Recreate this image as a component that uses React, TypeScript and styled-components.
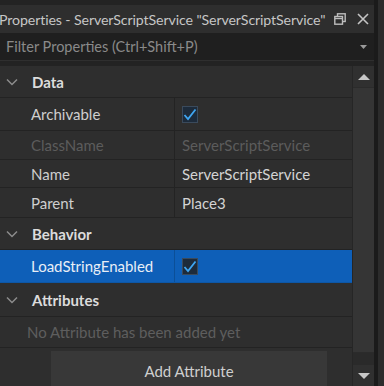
import React from 'react';
import styled, { createGlobalStyle } from 'styled-components';

const GlobalStyle = createGlobalStyle`
  html, body {
    margin: 0;
    padding: 0;
    background: #232323;
  }
  body {
    font-family: Lato, "Noto Sans", sans-serif;
  }
  *, *::before, *::after {
    box-sizing: border-box;
  }
`;

const Panel = styled.div`
  width: 384px;
  height: 386px;
  display: flex;
  overflow: hidden;
  background: #232323;
`;

const Main = styled.div`
  width: 374px;
  display: flex;
  flex-direction: column;
  padding-top: 5px;
`;

const Edge = styled.div`
  flex: 1;
  border-left: 4px solid #1b1b1b;
  background: #2c2c2c;
`;

const TitleBar = styled.div`
  height: 28px;
  background: #2e2e2e;
  display: flex;
  align-items: center;
  color: #c6c6c6;
  font-size: 14.2px;
  white-space: nowrap;
  overflow: hidden;
`;

const TitleText = styled.span`
  flex: 1;
  min-width: 0;
  margin-left: -1px;
  letter-spacing: -0.12px;
`;

const TitleIcons = styled.div`
  display: flex;
  align-items: center;
  gap: 11px;
  padding-right: 5px;
  flex-shrink: 0;
`;

const FilterBar = styled.div`
  height: 28px;
  background: #1f1f1f;
  display: flex;
  align-items: center;
  justify-content: space-between;
  padding: 0 7px 0 6px;
  color: #8a8a8a;
  font-size: 14.5px;
  border-bottom: 1px solid #2f2f2f;
`;

const Content = styled.div`
  margin-top: 5px;
  flex: 1;
  display: flex;
  gap: 1px;
  background: #262626;
`;

const List = styled.div`
  width: 352px;
  display: flex;
  flex-direction: column;
  background: #2e2e2e;
`;

const HeaderRow = styled.div<{ $h: number }>`
  height: ${p => p.$h}px;
  flex-shrink: 0;
  display: flex;
  align-items: center;
  border-bottom: 1px solid #232323;
  color: #dcdcdc;
  font-weight: 700;
  font-size: 15px;
`;

const Chevron = styled.span`
  width: 32px;
  display: flex;
  justify-content: center;
  padding-right: 8px;
`;

const PropRow = styled.div<{ $h: number; $selected?: boolean }>`
  height: ${p => p.$h}px;
  flex-shrink: 0;
  display: grid;
  grid-template-columns: 175px 1fr;
  border-bottom: 1px solid ${p => (p.$selected ? '#0d57a6' : '#232323')};
  background: ${p => (p.$selected ? '#0e5fb8' : '#2e2e2e')};
  font-size: 15px;
`;

const NameCell = styled.div<{ $dim?: boolean; $selected?: boolean }>`
  display: flex;
  align-items: center;
  padding-left: 31px;
  border-right: 1px solid ${p => (p.$selected ? '#0b4f98' : '#232323')};
  color: ${p => (p.$dim ? '#5c5c5c' : p.$selected ? '#e8eef6' : '#cfcfcf')};
`;

const ValueCell = styled.div<{ $dim?: boolean }>`
  display: flex;
  align-items: center;
  padding-left: 7px;
  color: ${p => (p.$dim ? '#5c5c5c' : '#d4d4d4')};
`;

const CheckBox = styled.span`
  width: 16px;
  height: 17px;
  background: #1d2b3b;
  border: 1px solid #3a4a5c;
  display: flex;
  align-items: center;
  justify-content: center;
`;

const EmptyNote = styled.div`
  height: 31px;
  flex-shrink: 0;
  display: flex;
  align-items: center;
  padding-left: 27px;
  color: #5e5e5e;
  font-size: 15px;
  border-bottom: 1px solid #232323;
`;

const ButtonArea = styled.div`
  flex: 1;
  padding: 3px 25px 0 51px;
  display: flex;
`;

const AddButton = styled.div`
  flex: 1;
  background: #383838;
  color: #cfcfcf;
  font-size: 15px;
  display: flex;
  justify-content: center;
  padding-top: 11px;
`;

const Scrollbar = styled.div`
  width: 21px;
  display: flex;
  flex-direction: column;
  background: #2b2b2b;
`;

const ScrollArrow = styled.div`
  height: 21px;
  flex-shrink: 0;
  display: flex;
  align-items: center;
  justify-content: center;
  background: #303030;
`;

const Thumb = styled.div`
  height: 264px;
  flex-shrink: 0;
  background: #353535;
  margin: 1px 0;
`;

const Track = styled.div`
  flex: 1;
  background: #2a2a2a;
`;

const ChevronIcon = () => (
  <svg width="12" height="8" viewBox="0 0 12 8">
    <polyline points="1,1.5 6,6.5 11,1.5" fill="none" stroke="#8c8c8c" strokeWidth="1.5" />
  </svg>
);

const Check = () => (
  <svg width="14" height="13" viewBox="0 0 14 13">
    <polyline points="1.5,7 5,11 12.5,1.5" fill="none" stroke="#3fa6f2" strokeWidth="1.8" />
  </svg>
);

const Section = ({ title, h }: { title: string; h: number }) => (
  <HeaderRow $h={h}>
    <Chevron><ChevronIcon /></Chevron>
    {title}
  </HeaderRow>
);

type Prop = { name: string; value: string | boolean; h: number; dim?: boolean; selected?: boolean };

const Property = ({ name, value, h, dim, selected }: Prop) => (
  <PropRow $h={h} $selected={selected}>
    <NameCell $dim={dim} $selected={selected}>{name}</NameCell>
    <ValueCell $dim={dim}>
      {typeof value === 'boolean' ? <CheckBox>{value && <Check />}</CheckBox> : value}
    </ValueCell>
  </PropRow>
);

export default function App() {
  return (
    <>
      <GlobalStyle />
      <Panel>
        <Main>
          <TitleBar>
            <TitleText>Properties - ServerScriptService "ServerScriptService"</TitleText>
            <TitleIcons>
              <svg width="12" height="12" viewBox="0 0 12 12">
                <rect x="3.5" y="0.8" width="7.7" height="7.7" fill="none" stroke="#bdbdbd" strokeWidth="1.4" />
                <rect x="0.8" y="3.5" width="7.7" height="7.7" fill="#2e2e2e" stroke="#bdbdbd" strokeWidth="1.4" />
                <line x1="0.8" y1="5.5" x2="8.5" y2="5.5" stroke="#bdbdbd" strokeWidth="1.4" />
              </svg>
              <svg width="12" height="12" viewBox="0 0 12 12">
                <path d="M1 1 L11 11 M11 1 L1 11" stroke="#c4c4c4" strokeWidth="1.6" />
              </svg>
            </TitleIcons>
          </TitleBar>
          <FilterBar>
            <span>Filter Properties (Ctrl+Shift+P)</span>
            <svg width="7" height="4" viewBox="0 0 7 4">
              <polygon points="0,0 7,0 3.5,4" fill="#9a9a9a" />
            </svg>
          </FilterBar>
          <Content>
            <List>
              <Section title="Data" h={32} />
              <Property name="Archivable" value={true} h={33} />
              <Property name="ClassName" value="ServerScriptService" h={29} dim />
              <Property name="Name" value="ServerScriptService" h={28} />
              <Property name="Parent" value="Place3" h={30} />
              <Section title="Behavior" h={32} />
              <Property name="LoadStringEnabled" value={true} h={33} selected />
              <Section title="Attributes" h={34} />
              <EmptyNote>No Attribute has been added yet</EmptyNote>
              <ButtonArea>
                <AddButton>Add Attribute</AddButton>
              </ButtonArea>
            </List>
            <Scrollbar>
              <ScrollArrow>
                <svg width="12" height="6" viewBox="0 0 12 6">
                  <polygon points="0,6 12,6 6,0" fill="#c8c8c8" />
                </svg>
              </ScrollArrow>
              <Thumb />
              <Track />
              <ScrollArrow>
                <svg width="12" height="6" viewBox="0 0 12 6">
                  <polygon points="0,0 12,0 6,6" fill="#c8c8c8" />
                </svg>
              </ScrollArrow>
            </Scrollbar>
          </Content>
        </Main>
        <Edge />
      </Panel>
    </>
  );
}
